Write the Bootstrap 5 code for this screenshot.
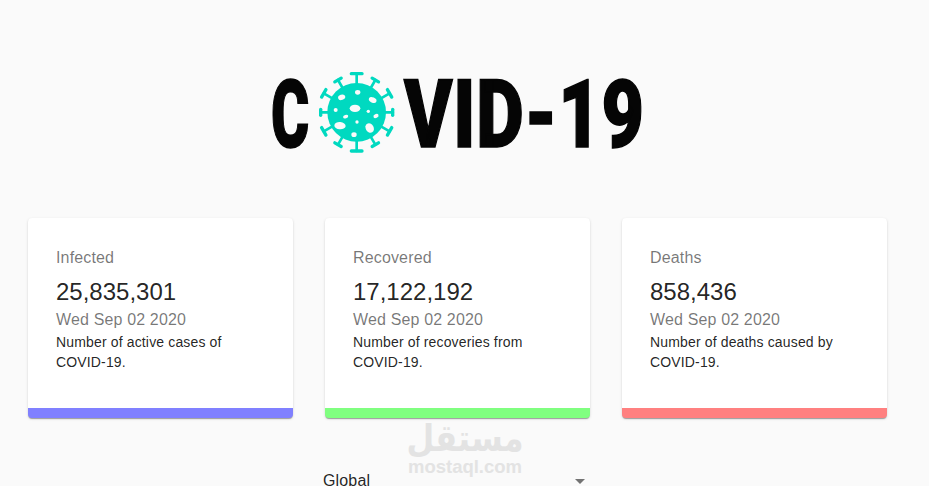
<!DOCTYPE html>
<html lang="en">

<head>
    <meta charset="UTF-8">
    <meta name="viewport" content="width=device-width, initial-scale=1.0">
    <title>COVID-19</title>
    <link href="https://cdn.jsdelivr.net/npm/bootstrap@5.3.0/dist/css/bootstrap.min.css" rel="stylesheet">
    <style>
        body {
            font-family: "Liberation Sans", Arial, sans-serif;
            background-color: #fafafa;
            color: rgba(0, 0, 0, .87);
            overflow: hidden;
            height: 486px;
        }

        .page-wrap {
            padding: 0 42px 0 28px;
            position: relative;
        }

        .logo-row {
            height: 218px;
            padding: 70px 0 0 243px;
        }

        .logo-text {
            font-family: "Roboto", sans-serif;
            font-weight: 900;
            font-size: 94px;
            line-height: 90px;
            height: 84px;
            color: #050505;
            -webkit-text-stroke: 1.5px #050505;
            transform-origin: left center;
            white-space: nowrap;
        }

        .logo-c {
            transform: scaleX(.62);
            width: 36px;
        }

        .logo-rest {
            transform: scaleX(.78);
            width: 240px;
            letter-spacing: 1px;
        }

        .virus-icon {
            width: 85px;
            height: 95px;
            margin: -5px 4px 0 8px;
            flex: none;
        }

        .stat-card {
            width: 265px;
            height: 200px;
            border: 0;
            border-radius: 4px;
            background: #fff;
            overflow: hidden;
            box-shadow: 0 2px 1px -1px rgba(0, 0, 0, .2), 0 1px 1px 0 rgba(0, 0, 0, .14), 0 1px 3px 0 rgba(0, 0, 0, .12);
            padding: 28px 28px 0;
        }

        .stat-infected {
            border-bottom: 10px solid #8080ff;
        }

        .stat-recovered {
            border-bottom: 10px solid #80ff80;
        }

        .stat-deaths {
            border-bottom: 10px solid #ff8080;
        }

        .stat-title,
        .stat-date {
            font-size: 16px;
            line-height: 24px;
            letter-spacing: .15px;
            color: rgba(0, 0, 0, .54);
        }

        .stat-title {
            margin-bottom: 6px;
        }

        .stat-value {
            font-size: 24px;
            line-height: 32px;
            font-weight: 400;
            margin: 0;
        }

        .stat-desc {
            font-size: 14px;
            line-height: 20px;
            letter-spacing: .15px;
            margin: 0;
        }

        .region-select {
            width: 267px;
            margin: 51px 0 0 295px;
            font-size: 16px;
            line-height: 24px;
            letter-spacing: .15px;
        }

        .region-caret {
            width: 0;
            height: 0;
            border-left: 5px solid transparent;
            border-right: 5px solid transparent;
            border-top: 5px solid rgba(0, 0, 0, .54);
            margin-right: 5px;
        }

        .watermark {
            position: absolute;
            left: 380px;
            top: 419px;
            width: 170px;
            text-align: center;
            color: #e3e3e3;
            font-weight: 700;
            pointer-events: none;
        }

        .watermark-ar {
            font-family: "DejaVu Sans", sans-serif;
            font-size: 32px;
            line-height: 34px;
            transform: scaleY(1.15);
            transform-origin: center top;
        }

        .watermark-en {
            font-size: 18.5px;
            line-height: 18px;
            margin-top: 5px;
        }
    </style>
</head>

<body>
    <div class="page-wrap">
        <!-- logo -->
        <div class="logo-row d-flex align-items-start">
            <div class="logo-text logo-c">C</div>
            <svg class="virus-icon" viewBox="0 0 255 285" fill="#00d9c0" stroke="#00d9c0" stroke-linecap="round">
                <g id="spikes">
                    <g><path stroke-width="8" d="M125 142V26" /><path stroke-width="10" d="M109 26H141" /></g>
                    <g transform="rotate(30 125 142)"><path stroke-width="8" d="M125 142V30" /><path stroke-width="10" d="M114 30H136" /></g>
                    <g transform="rotate(60 125 142)"><path stroke-width="8" d="M125 142V28" /><path stroke-width="10" d="M112 28H138" /></g>
                    <g transform="rotate(90 125 142)"><path stroke-width="8" d="M125 142V34" /><path stroke-width="10" d="M116 34H134" /></g>
                    <g transform="rotate(120 125 142)"><path stroke-width="8" d="M125 142V28" /><path stroke-width="10" d="M112 28H138" /></g>
                    <g transform="rotate(150 125 142)"><path stroke-width="8" d="M125 142V30" /><path stroke-width="10" d="M114 30H136" /></g>
                    <g transform="rotate(180 125 142)"><path stroke-width="8" d="M125 142V26" /><path stroke-width="10" d="M109 26H141" /></g>
                    <g transform="rotate(210 125 142)"><path stroke-width="8" d="M125 142V30" /><path stroke-width="10" d="M114 30H136" /></g>
                    <g transform="rotate(240 125 142)"><path stroke-width="8" d="M125 142V28" /><path stroke-width="10" d="M112 28H138" /></g>
                    <g transform="rotate(270 125 142)"><path stroke-width="8" d="M125 142V34" /><path stroke-width="10" d="M116 34H134" /></g>
                    <g transform="rotate(300 125 142)"><path stroke-width="8" d="M125 142V28" /><path stroke-width="10" d="M112 28H138" /></g>
                    <g transform="rotate(330 125 142)"><path stroke-width="8" d="M125 142V30" /><path stroke-width="10" d="M114 30H136" /></g>
                </g>
                <circle cx="125" cy="142" r="88" stroke="none" />
                <g fill="#fafafa" stroke="none">
                    <ellipse cx="128" cy="82" rx="8" ry="7" />
                    <ellipse cx="80" cy="97" rx="11" ry="8" transform="rotate(-20 80 97)" />
                    <ellipse cx="173" cy="105" rx="12" ry="8" transform="rotate(25 173 105)" />
                    <ellipse cx="120" cy="130" rx="16" ry="11" />
                    <circle cx="62" cy="135" r="6" />
                    <circle cx="160" cy="139" r="5" />
                    <ellipse cx="92" cy="155" rx="8" ry="5" transform="rotate(-20 92 155)" />
                    <ellipse cx="183" cy="153" rx="8" ry="6" transform="rotate(-25 183 153)" />
                    <circle cx="126" cy="171" r="5" />
                    <ellipse cx="75" cy="182" rx="17" ry="11" transform="rotate(5 75 182)" />
                    <ellipse cx="164" cy="189" rx="12" ry="15" transform="rotate(-30 164 189)" />
                    <ellipse cx="117" cy="209" rx="8" ry="7" />
                </g>
            </svg>
            <div class="logo-text logo-rest">VID-19</div>
        </div>

        <!-- stat cards -->
        <div class="d-flex gap-0 justify-content-between">
            <div class="stat-card stat-infected">
                <div class="stat-title">Infected</div>
                <h5 class="stat-value">25,835,301</h5>
                <div class="stat-date">Wed Sep 02 2020</div>
                <p class="stat-desc">Number of active cases of COVID-19.</p>
            </div>
            <div class="stat-card stat-recovered">
                <div class="stat-title">Recovered</div>
                <h5 class="stat-value">17,122,192</h5>
                <div class="stat-date">Wed Sep 02 2020</div>
                <p class="stat-desc">Number of recoveries from COVID-19.</p>
            </div>
            <div class="stat-card stat-deaths">
                <div class="stat-title">Deaths</div>
                <h5 class="stat-value">858,436</h5>
                <div class="stat-date">Wed Sep 02 2020</div>
                <p class="stat-desc">Number of deaths caused by COVID-19.</p>
            </div>
        </div>

        <!-- country picker -->
        <div class="region-select d-flex justify-content-between align-items-center">
            <span>Global</span>
            <span class="region-caret"></span>
        </div>

        <div class="watermark">
            <div class="watermark-ar" lang="ar" dir="rtl">مستقل</div>
            <div class="watermark-en">mostaql.com</div>
        </div>
    </div>

    <script src="https://cdn.jsdelivr.net/npm/bootstrap@5.3.0/dist/js/bootstrap.bundle.min.js"></script>
</body>

</html>
